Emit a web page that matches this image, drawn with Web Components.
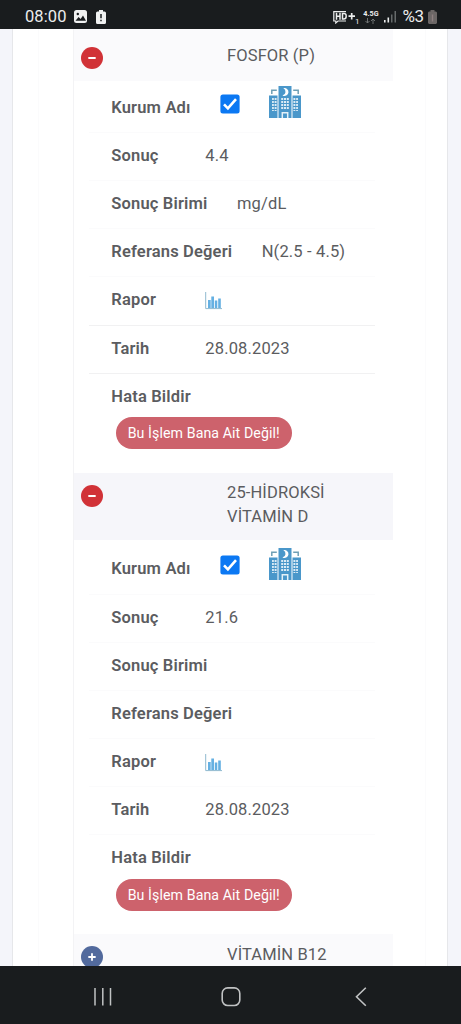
<!DOCTYPE html>
<html lang="tr">
<head>
<meta charset="utf-8">
<meta name="viewport" content="width=device-width">
<title>Tahliller</title>
<style>
html,body{margin:0;height:100%;overflow:hidden}
body{font-family:Roboto,"Liberation Sans",sans-serif;color:#5b5c60;background:#f4f5fa}
</style>
</head>
<body>
<lab-app></lab-app>
<script>
const define=(name,html)=>customElements.define(name,class extends HTMLElement{
  constructor(){super();this.attachShadow({mode:'open'}).innerHTML=html;}
});

define('status-bar',`<style>
:host{display:flex;align-items:center;height:28.500px;background:#191c1e;color:#eceded;box-sizing:border-box;padding:5px 24.500px 0 25px;flex:none}
.time{font-size:16.5px;line-height:23px;letter-spacing:.1px;width:49px}
.l{display:block}.sp{flex:1}
.net{font-size:7.200px;font-weight:700;line-height:8px;width:17px;margin-left:3px;text-align:center;letter-spacing:0}
.net svg{display:block;margin:0 auto}
.sub{font-size:8px;line-height:8px;align-self:flex-end;margin:0 0 3px -1px}
.pct{font-size:17px;line-height:23px;margin:0 4px 0 5px;letter-spacing:-.5px}
</style>
<span class="time">08:00</span>
<svg class="l" width="13" height="13" viewBox="0 0 13 13"><rect width="13" height="13" rx="2.5" fill="#f0f1f1"/><circle cx="3.8" cy="4" r="1.2" fill="#191c1e"/><path d="M1.5 10.8 4.6 7l2 2L9 5.6l3 5.2z" fill="#191c1e"/></svg>
<svg class="l" style="margin-left:9px" width="10" height="14" viewBox="0 0 10 14"><path d="M3 0h4v1.5h1.5A1.5 1.5 0 0 1 10 3v9.5A1.5 1.5 0 0 1 8.500 14h-7A1.500 1.500 0 0 1 0 12.500V3a1.500 1.500 0 0 1 1.500-1.500H3z" fill="#f0f1f1"/><path d="M5 4v4.200M5 9.700v1.600" stroke="#191c1e" stroke-width="1.500"/></svg>
<span class="sp"></span>
<svg width="23" height="14" viewBox="0 0 23 14" fill="none" stroke="#eceded"><path d="M13 1.600H.8V11h2v2L5 11h8" stroke-width="1.200"/><path d="M3.500 2.700v7M7 2.700v7M3.500 6.200H7M9.500 3.400v5.600h1.200q2.500 0 2.500-2.800T10.700 3.400z" stroke-width="1.500"/><path d="M15.500 6.200H22M18.700 2.900v6.600" stroke-width="1.700"/></svg>
<span class="sub">1</span>
<span class="net">4.5G<svg width="11" height="6" viewBox="0 0 11 6" fill="none" stroke="#777a7b" stroke-width=".9"><path d="M2.500 0v5M.5 3l2 2 2-2M8 6V1M6 3l2-2 2 2"/></svg></span>
<svg style="margin-left:5px" width="13" height="13" viewBox="0 0 13 13"><path d="M0 10h1.600v2.500H0zM3.500 7.500h1.600v5H3.500z" fill="#eceded"/><path d="M7 4.500h1.500v8H7zM10.500 1H12v11.500h-1.500z" fill="#666a6b"/></svg>
<span class="pct">%3</span>
<svg width="9" height="14" viewBox="0 0 9 14"><path d="M2.500 0h4v1.500H8L9 2.500V13l-1 1H1l-1-1V2.500l1-1h1.500z" fill="#6c6766"/><path d="M4.500 4.500v7" stroke="#8e8080" stroke-width="1.400"/></svg>`);

define('nav-bar',`<style>
:host{display:grid;grid-template-columns:205px 52px 204px;height:58px;align-items:center;background:#191c1e;flex:none;box-sizing:border-box;padding-top:3px}
svg{display:block;justify-self:center}
svg:last-child{margin-right:-4px}
</style>
<svg width="20" height="20" viewBox="0 0 20 20" stroke="#c0c2c3" stroke-width="1.500"><path d="M2 1v17.500M9.800 1v17.500M17.500 1v17.500"/></svg>
<svg width="20" height="20" viewBox="0 0 20 20" fill="none" stroke="#c0c2c3" stroke-width="1.600"><rect x="1.200" y=".900" width="17.600" height="17.600" rx="5.500"/></svg>
<svg width="12" height="20" viewBox="0 0 12 20" fill="none" stroke="#c0c2c3" stroke-width="1.600"><path d="M10.800.7 1.500 9.700l9.300 9"/></svg>`);

define('hospital-icon',`<style>:host{display:block}svg{display:block}</style>
<svg width="32" height="32" viewBox="0 0 32 32"><path d="M0 9.500h8.500V32H0zM23.500 9.500H32V32h-8.500zM9.500 0h13v32h-13z" fill="#4a97ca"/><path d="M2.800 8V4.200h5M29.200 8V4.200h-5" fill="none" stroke="#6f9fb5" stroke-width="1.500"/><path d="M14.300 2.200a4 4 0 1 1-.8 7.300a3.900 3.900 0 0 0 .8-7.300" fill="#fff"/><path d="M5.300 12v13M26.700 12v13" stroke="#dcecf6" stroke-width="4.500" stroke-dasharray="2 1"/><path d="M5.300 11.500v14M26.700 11.500v14" stroke="#4a97ca" stroke-width=".8"/><path d="M13.200 12v12M16 12v12M18.800 12v12" stroke="#dcecf6" stroke-width="2" stroke-dasharray="2 1"/><path d="M13.300 32v-5.300h5.400V32" fill="none" stroke="#e5f1f8" stroke-width="1.500"/></svg>`);

define('chart-icon',`<style>:host{display:block}svg{display:block}</style>
<svg width="17" height="18" viewBox="0 0 17 18"><path d="M.7 0v16.600H17" fill="none" stroke="#8fb9cf" stroke-width="1"/><path d="M3 8h2.700v8H3zM6.300 4.500H9V16H6.300zM9.800 8.500h2.500V16H9.800zM13.200 6.500h2.600V16h-2.600z" fill="#65b0e2"/></svg>`);

define('check-box',`<style>:host{display:block}svg{display:block}</style>
<svg width="20" height="20" viewBox="0 0 20 20"><rect x=".4" y=".4" width="19.200" height="19.200" rx="2.500" fill="#0b78f3"/><path d="m4 10.300 3.900 4L16 5.200" fill="none" stroke="#fff" stroke-width="2.600"/></svg>`);

define('test-head',`<style>
:host{display:grid;grid-template-columns:153px 1fr;box-sizing:border-box;width:319px;background:var(--head,#f6f6fa);flex:none;font-size:16.500px;line-height:24px;letter-spacing:.12px}
i{display:grid;place-items:center;width:22px;height:22px;border-radius:50%;background:#d13237;margin:var(--dot,12px) 0 0 7px}
:host([closed]) i{background:#526a9d}
.v{display:none}:host([closed]) .v{display:block}
.t{padding-top:var(--top,8px);width:115px}
</style><i><svg width="10" height="10" viewBox="0 0 10 10" stroke="#fff" stroke-width="1.800" stroke-linecap="round"><path d="M2 5h6"/><path class="v" d="M5 2v6"/></svg></i><div class="t"><slot></slot></div>`);

define('test-row',`<style>
:host{display:flex;gap:29.500px;box-sizing:border-box;width:286px;height:48.100px;margin-left:15px;padding:11px 0 0 22.300px;border-bottom:1px solid var(--rule,#fbfbfc);font-size:16.500px;line-height:24px;letter-spacing:.15px}
.k{font-weight:600;min-width:64.500px;letter-spacing:.17px;white-space:nowrap}
.v{display:flex;white-space:nowrap}
</style><span class="k"><slot name="k"></slot></span><span class="v"><slot></slot></span>`);

define('pill-button',`<style>
:host{display:block;margin:-2.500px 0 0 42px}
button{display:block;border:0;width:175.500px;height:32px;padding:0;border-radius:16px;background:#cd626c;color:#fff;font:14.200px/32px Roboto,sans-serif;letter-spacing:.08px;white-space:nowrap}
</style><button><slot></slot></button>`);

customElements.define('test-block',class extends HTMLElement{
  connectedCallback(){
    const d=this.dataset;
    this.attachShadow({mode:'open'}).innerHTML=`<style>
:host{display:block;height:461.500px;flex:none}
test-head{height:67.500px}
:host([data-short]) test-head{height:52px;--head:#fafafc;--top:15px;--dot:18.500px}
:host([data-short]){height:444px}
:host([data-short]) .line{--rule:#f1f1f2}
.kurum{height:54.500px;padding-top:17px}
:host([data-short]) .kurum{height:52.700px;padding-top:15.500px}
check-box{margin-top:-2px}
hospital-icon{margin:-9px 0 0 29px}
:host([data-short]) hospital-icon{margin-top:-10px}
chart-icon{margin-top:4px}
.last{border:0;height:46px}
:host(:not([data-short])) pill-button{margin-top:-2px}
</style>
<test-head>${d.name}</test-head>
<test-row class="kurum"><span slot="k">Kurum Adı</span><check-box></check-box><hospital-icon></hospital-icon></test-row>
<test-row><span slot="k">Sonuç</span>${d.result}</test-row>
<test-row><span slot="k">Sonuç Birimi</span>${d.unit||''}</test-row>
<test-row><span slot="k">Referans Değeri</span>${d.ref||''}</test-row>
<test-row class="line"><span slot="k">Rapor</span><chart-icon></chart-icon></test-row>
<test-row class="line"><span slot="k">Tarih</span>28.08.2023</test-row>
<test-row class="last"><span slot="k">Hata Bildir</span></test-row>
<pill-button>Bu İşlem Bana Ait Değil!</pill-button>`;
  }
});

define('lab-app',`<style>
:host{display:flex;flex-direction:column;height:1024px;width:461px}
main{flex:1;min-height:0;overflow:hidden;display:flex;padding:0 13px 0 12px;background:#f4f5fa}
.card{width:436px;box-sizing:border-box;background:#fff;border:solid #e6e7ea;border-width:0 1px;padding:0 21px 0 25px;display:flex}
.in{flex:1;border:solid #fbfbfc;border-width:0 1px;padding-left:34px}
.list{display:flex;flex-direction:column;border-left:1px solid #f3f3f5}
test-head{height:52px;--head:#fafafc;--top:8.500px;--dot:12px}
</style>
<status-bar></status-bar>
<main><div class="card"><div class="in"><div class="list">
<test-block data-short data-name="FOSFOR (P)" data-result="4.4" data-unit="mg/dL" data-ref="N(2.5 - 4.5)"></test-block>
<test-block data-name="25-HİDROKSİ VİTAMİN D" data-result="21.6"></test-block>
<test-head closed>VİTAMİN B12</test-head>
</div></div></div></main>
<nav-bar></nav-bar>`);
</script>
</body>
</html>
